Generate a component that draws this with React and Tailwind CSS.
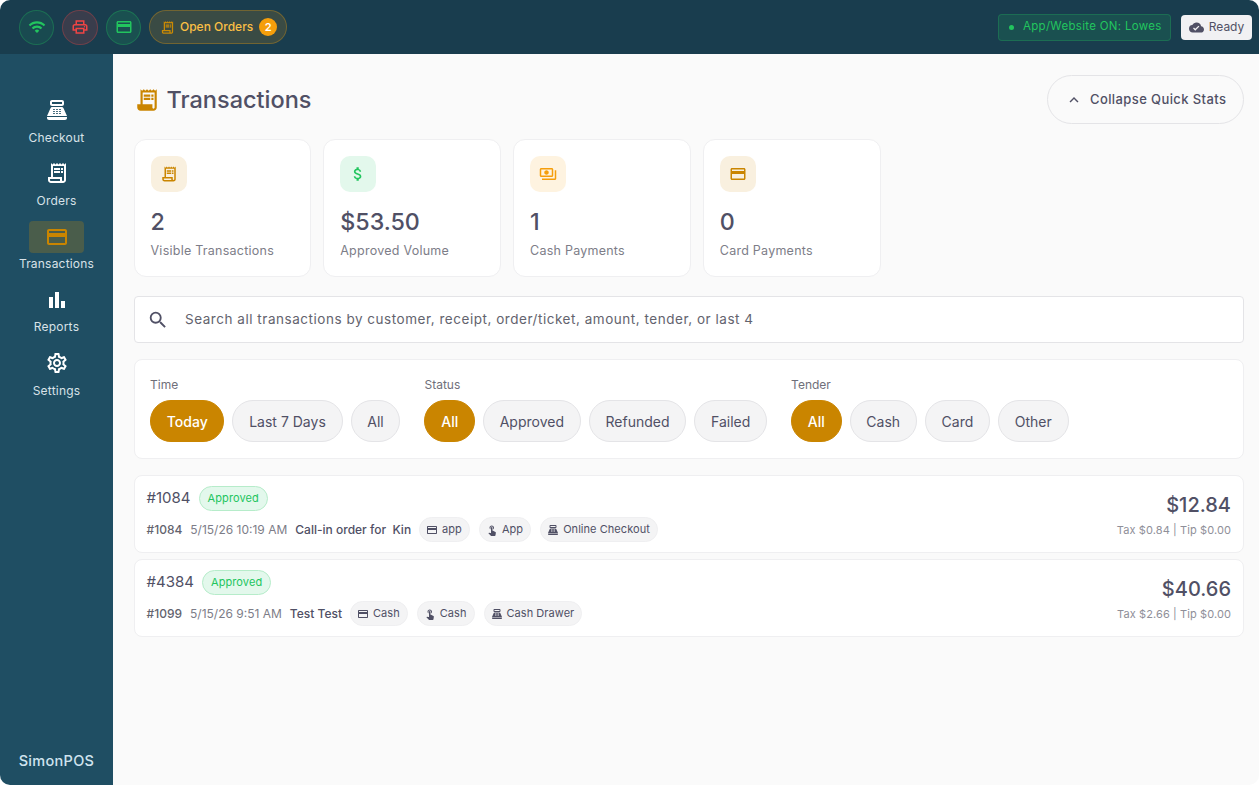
import {
  MdAttachMoney,
  MdBarChart,
  MdCloudDone,
  MdCreditCard,
  MdExpandLess,
  MdOutlinePayments,
  MdOutlinePrint,
  MdOutlineReceiptLong,
  MdOutlineSettings,
  MdPointOfSale,
  MdReceiptLong,
  MdSearch,
  MdTouchApp,
  MdWifi,
} from 'react-icons/md'

const navItems = [
  { label: 'Checkout', icon: MdPointOfSale },
  { label: 'Orders', icon: MdOutlineReceiptLong },
  { label: 'Transactions', icon: MdCreditCard, active: true },
  { label: 'Reports', icon: MdBarChart },
  { label: 'Settings', icon: MdOutlineSettings },
]

const stats = [
  { value: '2', label: 'Visible Transactions', icon: MdOutlineReceiptLong, box: 'bg-[#f9f0df]', color: 'text-[#ca8500]' },
  { value: '$53.50', label: 'Approved Volume', icon: MdAttachMoney, box: 'bg-[#e3f8ec]', color: 'text-[#22c55e]' },
  { value: '1', label: 'Cash Payments', icon: MdOutlinePayments, box: 'bg-[#fef3e0]', color: 'text-[#f59e0b]' },
  { value: '0', label: 'Card Payments', icon: MdCreditCard, box: 'bg-[#f9f0df]', color: 'text-[#ca8500]' },
]

const filters = [
  { title: 'Time', options: ['Today', 'Last 7 Days', 'All'] },
  { title: 'Status', options: ['All', 'Approved', 'Refunded', 'Failed'] },
  { title: 'Tender', options: ['All', 'Cash', 'Card', 'Other'] },
]

const transactions = [
  {
    id: '#1084',
    order: '#1084',
    date: '5/15/26 10:19 AM',
    customer: 'Call-in order for  Kin',
    total: '$12.84',
    tax: 'Tax $0.84 | Tip $0.00',
    chips: [
      { label: 'app', icon: MdCreditCard },
      { label: 'App', icon: MdTouchApp },
      { label: 'Online Checkout', icon: MdPointOfSale },
    ],
  },
  {
    id: '#4384',
    order: '#1099',
    date: '5/15/26 9:51 AM',
    customer: 'Test Test',
    total: '$40.66',
    tax: 'Tax $2.66 | Tip $0.00',
    chips: [
      { label: 'Cash', icon: MdCreditCard },
      { label: 'Cash', icon: MdTouchApp },
      { label: 'Cash Drawer', icon: MdPointOfSale },
    ],
  },
]

function TopBar() {
  return (
    <header className="h-[54px] shrink-0 flex items-center justify-between pl-[19px] pr-[7px] bg-[#193d4e]">
      <div className="flex items-center gap-2">
        <div className="w-[35px] h-[35px] rounded-full border border-[#22c55e]/30 bg-[#22c55e]/10 flex items-center justify-center text-[#22c55e]">
          <MdWifi size={18} />
        </div>
        <div className="w-[36px] h-[35px] rounded-full border border-[#ef4444]/30 bg-[#ef4444]/15 flex items-center justify-center text-[#ef4444]">
          <MdOutlinePrint size={18} />
        </div>
        <div className="w-[35px] h-[35px] rounded-full border border-[#22c55e]/30 bg-[#22c55e]/15 flex items-center justify-center text-[#22c55e]">
          <MdCreditCard size={18} />
        </div>
        <div className="h-[34px] w-[138px] rounded-full border border-[#f59e0b]/30 bg-[#f59e0b]/15 flex items-center pl-[10px] text-[#fbbf44] text-[12px] font-medium">
          <MdOutlineReceiptLong size={15} className="text-[#ca8a04]" />
          <span className="ml-[5px]">Open Orders</span>
          <span className="ml-[6px] w-[18px] h-[18px] rounded-full bg-[#f59e0b] text-white flex items-center justify-center text-[11px] font-semibold">2</span>
        </div>
      </div>
      <div className="flex items-center gap-[10px]">
        <div className="h-[27px] w-[173px] rounded-[4px] border border-[#22c55e]/25 bg-[#22c55e]/15 flex items-center pl-[10px] text-[#22c55e] text-[11.5px] tracking-[0.3px]">
          <span className="w-[5px] h-[5px] rounded-full bg-[#22c55e]" />
          <span className="ml-[9px]">App/Website ON: Lowes</span>
        </div>
        <div className="h-[25px] w-[71px] rounded-[4px] bg-[#f1f1f3] flex items-center justify-center gap-[5px] text-[#505065] text-[12px]">
          <MdCloudDone size={15} />
          <span>Ready</span>
        </div>
      </div>
    </header>
  )
}

function Sidebar() {
  return (
    <aside className="w-[113px] shrink-0 flex flex-col items-center bg-[#1f4e63] pt-[38px] pb-[13px]">
      <nav className="flex flex-col items-center gap-[1px]">
        {navItems.map(({ label, icon: Icon, active }) => (
          <div key={label} className="w-[100px] h-[62.25px] flex flex-col items-center">
            <div className={`w-[55px] h-[32px] mt-[2px] rounded-[4px] flex items-center justify-center ${active ? 'bg-[#ca8a04]/25 text-[#ca8500]' : 'text-white'}`}>
              <Icon size={24} />
            </div>
            <span className="mt-[3.5px] text-[12px] leading-[16px] tracking-[0.2px] text-[#d8e2e8]">{label}</span>
          </div>
        ))}
      </nav>
      <div className="mt-auto text-[14.5px] font-medium tracking-[0.3px] text-[#cfe3ee]">SimonPOS</div>
    </aside>
  )
}

function StatCard({ value, label, icon: Icon, box, color }) {
  return (
    <div className="w-[177.75px] h-[138px] rounded-[12px] border border-[#efeff1] bg-white pt-4 pl-4">
      <div className={`w-9 h-9 rounded-[10px] flex items-center justify-center ${box} ${color}`}>
        <Icon size={18} />
      </div>
      <div className="mt-[11.5px] text-[23.25px] leading-[36px] font-medium text-[#505065]">{value}</div>
      <div className="mt-[2.5px] text-[12.5px] leading-[18px] tracking-[0.25px] text-[#7d7d88]">{label}</div>
    </div>
  )
}

function FilterGroup({ title, options }) {
  return (
    <div>
      <div className="text-[12px] leading-[16px] text-[#6f6f7a]">{title}</div>
      <div className="mt-[7px] flex gap-2">
        {options.map((option, i) => (
          <div
            key={option}
            className={`h-[42px] px-[15.75px] rounded-full border flex items-center text-[14px] ${
              i === 0
                ? 'bg-[#ca8500] border-[#ca8500] text-white font-medium'
                : 'bg-[#f4f4f5] border-[#e4e4e7] text-[#505065]'
            }`}
          >
            {option}
          </div>
        ))}
      </div>
    </div>
  )
}

function TransactionRow({ tx }) {
  return (
    <div className="h-[78px] rounded-[8px] border border-[#efeff1] bg-white px-3 flex justify-between">
      <div>
        <div className="mt-[10px] flex items-center gap-2">
          <span className="pb-[1px] text-[15px] leading-[24px] text-[#505065]">{tx.id}</span>
          <span className="h-[25px] px-2 rounded-full border border-[#b6ecca] bg-[#e3f8ec] flex items-center text-[11px] tracking-[0.1px] text-[#22c55e]">Approved</span>
        </div>
        <div className="mt-[6px] flex items-center text-[12px]">
          <span className="font-medium text-[#63636e]">{tx.order}</span>
          <span className="ml-2 text-[#7d7d88]">{tx.date}</span>
          <span className="ml-2 whitespace-pre font-medium text-[#505065]">{tx.customer}</span>
          <div className="ml-2 flex gap-[9px]">
            {tx.chips.map(({ label, icon: Icon }, i) => (
              <span key={i} className="h-[25px] pl-[6px] pr-[7px] rounded-full border border-[#efeff1] bg-[#f4f4f5] flex items-center gap-1 text-[11px] tracking-[0.05px] text-[#505065]">
                <Icon size={12} />
                {label}
              </span>
            ))}
          </div>
        </div>
      </div>
      <div className="flex flex-col items-end">
        <span className="mt-[14px] text-[20px] leading-[30px] font-medium text-[#505065]">{tx.total}</span>
        <span className="mt-[2.5px] text-[11px] leading-[14px] tracking-[0.1px] text-[#8f8f99]">{tx.tax}</span>
      </div>
    </div>
  )
}

export default function App() {
  return (
    <div className="h-[785px] w-[1259px] rounded-[10px] overflow-hidden flex flex-col font-['Inter',sans-serif]">
      <TopBar />
      <div className="flex flex-1 min-h-0">
        <Sidebar />
        <main className="flex-1 bg-[#fafafa] pl-[20.5px] pr-[15px]">
          <div className="mt-[21px] h-[49px] flex items-center justify-between">
            <div className="flex items-center gap-[7px]">
              <MdReceiptLong size={26} className="text-[#ca8500]" />
              <h1 className="text-[23.5px] font-medium text-[#505065]">Transactions</h1>
            </div>
            <div className="w-[197px] h-[49px] rounded-full border border-[#e4e4e7] flex items-center pl-[17px] text-[13px] font-medium tracking-[0.4px] text-[#505065]">
              <MdExpandLess size={18} />
              <span className="ml-[7px]">Collapse Quick Stats</span>
            </div>
          </div>

          <div className="mt-[15px] flex gap-3">
            {stats.map((stat) => (
              <StatCard key={stat.label} {...stat} />
            ))}
          </div>

          <div className="mt-[19px] h-[47px] rounded-[4px] border border-[#e4e4e7] bg-white flex items-center pl-[12px] text-[13.5px] tracking-[0.53px] text-[#63636e]">
            <MdSearch size={22} className="text-[#505065]" />
            <span className="ml-[16.5px]">Search all transactions by customer, receipt, order/ticket, amount, tender, or last 4</span>
          </div>

          <div className="mt-4 h-[100px] rounded-[8px] border border-[#efeff1] bg-white pt-[17px] pl-[15.5px] flex gap-6">
            {filters.map((group) => (
              <FilterGroup key={group.title} {...group} />
            ))}
          </div>

          <div className="mt-4 flex flex-col gap-[6px]">
            {transactions.map((tx) => (
              <TransactionRow key={tx.id} tx={tx} />
            ))}
          </div>
        </main>
      </div>
    </div>
  )
}
